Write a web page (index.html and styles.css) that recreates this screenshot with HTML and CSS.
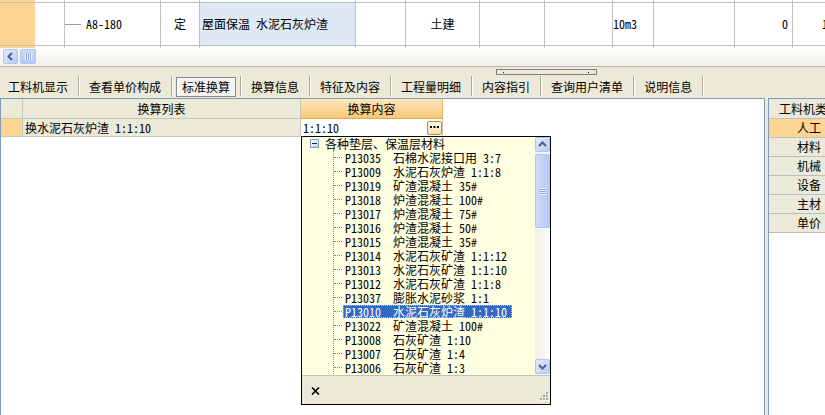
FILE: index.html
```html
<!DOCTYPE html>
<html lang="zh-CN">
<head>
<meta charset="utf-8">
<title>标准换算</title>
<link rel="stylesheet" href="styles.css">
</head>
<body>
<div class="topgrid">
  <div class="tg-row tg-r-top">
    <div class="c c0"></div><div class="c c1"></div><div class="c c2"></div><div class="c c3"></div><div class="c c4"></div><div class="c c5"></div><div class="c c6"></div><div class="c c7"></div><div class="c c8"></div><div class="c c9"></div><div class="c c10"></div><div class="c c11"></div><div class="c c12"></div>
  </div>
  <div class="tg-row tg-r-main">
    <div class="c c0"></div>
    <div class="c c1"></div>
    <div class="c c2"><span class="tl"></span>A8-180</div>
    <div class="c c3 center">定</div>
    <div class="c c4 hl">屋面保温 水泥石灰炉渣</div>
    <div class="c c5"></div>
    <div class="c c6 center">土建</div>
    <div class="c c7"></div>
    <div class="c c8"></div>
    <div class="c c9">10m3</div>
    <div class="c c10"></div>
    <div class="c c11 right">0</div>
    <div class="c c12">1</div>
  </div>
  <div class="tg-row tg-r-bot">
    <div class="c c0"></div><div class="c c1"></div><div class="c c2"></div><div class="c c3"></div><div class="c c4"></div><div class="c c5"></div><div class="c c6"></div><div class="c c7"></div><div class="c c8"></div><div class="c c9"></div><div class="c c10"></div><div class="c c11"></div><div class="c c12"></div>
  </div>
</div>

<div class="hscroll">
  <div class="sb-btn">
    <svg width="9" height="9" viewBox="0 0 9 9"><polyline points="6,1 2.5,4.5 6,8" fill="none" stroke="#4d6185" stroke-width="2"/></svg>
  </div>
  <div class="sb-btn sb-thumb-h">
    <svg width="7" height="7" viewBox="0 0 7 7"><path d="M0.5 0v7M2.5 0v7M4.5 0v7M6.5 0v7" stroke="#eef3ff" stroke-width="1"/><path d="M1.5 0v7M3.5 0v7M5.5 0v7" stroke="#8ea7dd" stroke-width="1"/></svg>
  </div>
</div>

<div class="splitter">
  <div class="grip"><i class="gdot"></i><i class="gdot"></i></div>
</div>

<div class="tabbar">
  <div class="tab first">工料机显示</div><i class="sep"></i>
  <div class="tab">查看单价构成</div><i class="sep"></i>
  <div class="tab active">标准换算</div><i class="sep"></i>
  <div class="tab">换算信息</div><i class="sep"></i>
  <div class="tab">特征及内容</div><i class="sep"></i>
  <div class="tab">工程量明细</div><i class="sep"></i>
  <div class="tab">内容指引</div><i class="sep"></i>
  <div class="tab">查询用户清单</div><i class="sep"></i>
  <div class="tab">说明信息</div><i class="sep"></i>
</div>

<div class="panels">
  <div class="lp">
    <div class="lrow lhead">
      <div class="l-sel"></div>
      <div class="l-list center">换算列表</div>
      <div class="l-cont center">换算内容</div>
    </div>
    <div class="lrow lbody">
      <div class="l-sel on"></div>
      <div class="l-list">换水泥石灰炉渣 1:1:10</div>
      <div class="l-cont">
        <span class="val">1:1:10</span>
        <span class="ell">
          <svg width="9" height="3" viewBox="0 0 9 3"><rect x="0" y="0" width="2" height="2" fill="#000"/><rect x="3.5" y="0" width="2" height="2" fill="#000"/><rect x="7" y="0" width="2" height="2" fill="#000"/></svg>
        </span>
      </div>
    </div>

    <div class="popup">
      <div class="tree">
        <div class="tree-list">
          <div class="root">
            <svg class="exp" width="9" height="9" viewBox="0 0 9 9">
              <defs><linearGradient id="eg" x1="0" y1="0" x2="1" y2="1"><stop offset="0" stop-color="#ffffff"/><stop offset="1" stop-color="#c4d2e4"/></linearGradient></defs>
              <rect x="0.5" y="0.5" width="8" height="8" fill="url(#eg)" stroke="#7f9fc0"/>
              <path d="M2 4.5h5" stroke="#1c2c4c" stroke-width="1"/>
            </svg>
            <span class="rlabel">各种垫层、保温层材料</span>
          </div>
          <div class="children">
            <div class="item"><span class="lab">P13035  石棉水泥接口用 3:7</span></div>
            <div class="item"><span class="lab">P13009  水泥石灰炉渣 1:1:8</span></div>
            <div class="item"><span class="lab">P13019  矿渣混凝土 35#</span></div>
            <div class="item"><span class="lab">P13018  炉渣混凝土 100#</span></div>
            <div class="item"><span class="lab">P13017  炉渣混凝土 75#</span></div>
            <div class="item"><span class="lab">P13016  炉渣混凝土 50#</span></div>
            <div class="item"><span class="lab">P13015  炉渣混凝土 35#</span></div>
            <div class="item"><span class="lab">P13014  水泥石灰矿渣 1:1:12</span></div>
            <div class="item"><span class="lab">P13013  水泥石灰矿渣 1:1:10</span></div>
            <div class="item"><span class="lab">P13012  水泥石灰矿渣 1:1:8</span></div>
            <div class="item"><span class="lab">P13037  膨胀水泥砂浆 1:1</span></div>
            <div class="item"><span class="lab selected">P13010  水泥石灰炉渣 1:1:10</span></div>
            <div class="item"><span class="lab">P13022  矿渣混凝土 100#</span></div>
            <div class="item"><span class="lab">P13008  石灰矿渣 1:10</span></div>
            <div class="item"><span class="lab">P13007  石灰矿渣 1:4</span></div>
            <div class="item"><span class="lab">P13006  石灰矿渣 1:3</span></div>
          </div>
        </div>
        <div class="vscroll">
          <div class="sb-btn">
            <svg width="9" height="9" viewBox="0 0 9 9"><polyline points="1,6 4.5,2.5 8,6" fill="none" stroke="#4d6185" stroke-width="2"/></svg>
          </div>
          <div class="sb-btn sb-thumb-v">
            <svg width="7" height="7" viewBox="0 0 7 7"><path d="M0 0.5h7M0 2.5h7M0 4.5h7M0 6.5h7" stroke="#eef3ff" stroke-width="1"/><path d="M0 1.5h7M0 3.5h7M0 5.5h7" stroke="#8ea7dd" stroke-width="1"/></svg>
          </div>
          <div class="sb-space"></div>
          <div class="sb-btn sb-down">
            <svg width="9" height="9" viewBox="0 0 9 9"><polyline points="1,3 4.5,6.5 8,3" fill="none" stroke="#4d6185" stroke-width="2"/></svg>
          </div>
        </div>
      </div>
      <div class="pfoot">
        <svg class="close" width="9" height="8" viewBox="0 0 9 8"><path d="M1 0.5L8 7.5M8 0.5L1 7.5" stroke="#000" stroke-width="1.6"/></svg>
        <svg class="rgrip" width="11" height="11" viewBox="0 0 11 11">
          <g fill="#fff"><rect x="9" y="1" width="2" height="2"/><rect x="6" y="4" width="2" height="2"/><rect x="9" y="4" width="2" height="2"/><rect x="3" y="7" width="2" height="2"/><rect x="6" y="7" width="2" height="2"/><rect x="9" y="7" width="2" height="2"/></g>
          <g fill="#a8a597"><rect x="8" y="0" width="2" height="2"/><rect x="5" y="3" width="2" height="2"/><rect x="8" y="3" width="2" height="2"/><rect x="2" y="6" width="2" height="2"/><rect x="5" y="6" width="2" height="2"/><rect x="8" y="6" width="2" height="2"/></g>
        </svg>
      </div>
    </div>
  </div>

  <div class="rp">
    <div class="rcol">
      <div class="rcell rhead">工料机类别</div>
      <div class="rcell on">人工</div>
      <div class="rcell">材料</div>
      <div class="rcell">机械</div>
      <div class="rcell">设备</div>
      <div class="rcell">主材</div>
      <div class="rcell">单价</div>
    </div>
  </div>
</div>
</body>
</html>
```

FILE: styles.css
```css
* { box-sizing: border-box; }
html, body { margin: 0; padding: 0; }
body {
  width: 825px;
  height: 415px;
  overflow: hidden;
  background: #ece9d8;
  color: #000;
  font-family: "Noto Sans Mono CJK SC", "Noto Sans CJK SC", sans-serif;
  font-size: 12px;
  line-height: 14px;
}

/* ---------- top grid ---------- */
.topgrid { height: 48px; background: #fff; overflow: hidden; }
.tg-row { display: flex; }
.tg-r-top { height: 3px; border-bottom: 1px solid #c0c0c0; }
.tg-r-main { height: 43px; border-bottom: 1px solid #c0c0c0; }
.tg-r-bot { height: 2px; }
.c {
  flex: none;
  height: 100%;
  border-right: 1px solid #c0c0c0;
  display: flex;
  align-items: center;
  white-space: nowrap;
  overflow: hidden;
}
.c.center { justify-content: center; }
.c.right { justify-content: flex-end; padding-right: 4px; }
.c0 { width: 35px; background: #fcd494; border-right: none; }
.c1 { width: 30px; }
.c2 { width: 96px; }
.c3 { width: 39px; }
.c4 { width: 156px; }
.c4.hl { background: #dfe8f5; padding-left: 2px; }
.c5 { width: 50px; }
.c6 { width: 74px; }
.c7 { width: 65px; }
.c8 { width: 68px; }
.c9 { width: 41px; }
.c10 { width: 81px; }
.c11 { width: 58px; }
.c12 { width: 60px; padding-left: 29px; border-right: none; }
.tl { display: inline-block; width: 16px; height: 1px; background: #9a9a9a; margin-right: 5px; }

/* ---------- horizontal scrollbar ---------- */
.hscroll {
  height: 19px;
  border-bottom: 1px solid #b8b6aa;
  background: linear-gradient(#fefefd, #f0efe9);
  display: flex;
  align-items: flex-start;
  gap: 2px;
  padding: 1px 0 0 3px;
}
.sb-btn {
  flex: none;
  width: 15px;
  height: 15px;
  border: 1px solid #b2c5f2;
  border-radius: 2px;
  background: linear-gradient(135deg, #e3ebfe, #b9ccf8);
  display: flex;
  align-items: center;
  justify-content: center;
}
.sb-thumb-h { width: 16px; background: linear-gradient(#cddafd, #b6c9f7); }

/* ---------- splitter ---------- */
.splitter { height: 8px; padding: 2px 0 0 496px; }
.grip {
  width: 101px;
  height: 6px;
  border: 1px solid #808080;
  display: flex;
  align-items: center;
  justify-content: space-between;
  padding: 0 7px 0 6px;
}
.gdot { display: block; width: 1px; height: 1px; background: #0000c0; }

/* ---------- tabs ---------- */
.tabbar { height: 23px; display: flex; align-items: flex-start; padding-top: 2px; }
.tab {
  flex: none;
  height: 20px;
  margin: 0 4px;
  padding: 0 5px;
  border: 1px solid transparent;
  display: flex;
  align-items: center;
  white-space: nowrap;
}
.tab.first { margin-left: 2px; }
.tab.active {
  border-color: #8a8a8a;
  background: #f4f3ee;
  box-shadow: inset 1px 1px 0 #ffffff;
}
.sep {
  flex: none;
  display: block;
  width: 1px;
  height: 20px;
  margin-top: -1px;
  background: #aca899;
  box-shadow: 1px 0 0 #ffffff;
}

/* ---------- panels ---------- */
.panels { height: 317px; display: flex; gap: 3px; }
.lp {
  flex: none;
  width: 765px;
  position: relative;
  background: #fff;
  border: 1px solid #7f9db9;
  border-bottom: none;
}
.lrow { display: flex; }
.lhead { height: 20px; }
.lbody { height: 18px; }
.l-sel, .l-list, .l-cont {
  flex: none;
  height: 100%;
  display: flex;
  align-items: center;
  white-space: nowrap;
  border-bottom: 1px solid #c9c6b6;
}
.center { justify-content: center; }
.l-sel { width: 22px; background: #ebe9d8; border-right: 1px solid #c9c6b6; }
.l-sel.on { background: #fcd494; }
.l-list { width: 278px; background: #ebe9d8; border-right: 1px solid #c9c6b6; }
.lbody .l-list { padding-left: 2px; }
.l-cont { width: 142px; border-right: 1px solid #c9c6b6; }
.lhead .l-cont { background: linear-gradient(#fee7bb, #f9c77a); border-right-color: #e9b76c; border-bottom-color: #e3a95a; }
.lbody .l-cont { background: #fff; padding-left: 2px; }
.val { flex: 1; }
.ell {
  flex: none;
  width: 15px;
  height: 14px;
  border: 1px solid #d08a2a;
  border-radius: 2px;
  background: linear-gradient(#fffbee, #f4dfae);
  display: flex;
  align-items: center;
  justify-content: center;
}

/* ---------- dropdown popup ---------- */
.popup {
  position: absolute;
  left: 300px;
  top: 37px;
  width: 250px;
  height: 269px;
  border: 1px solid #000;
  background: #ece9d8;
  display: flex;
  flex-direction: column;
}
.tree { height: 238px; display: flex; background: #ffffe1; }
.tree-list { flex: 1; }
.root { height: 13px; display: flex; align-items: center; }
.exp { flex: none; margin-left: 8px; }
.rlabel { margin-left: 6px; white-space: nowrap; }
.children { margin-left: 31px; border-left: 1px dotted #8c8c8c; }
.item { height: 14px; display: flex; align-items: center; }
.item::before {
  content: "";
  flex: none;
  width: 8px;
  margin-right: 1px;
  border-top: 1px dotted #8c8c8c;
}
.lab { white-space: pre; height: 13px; line-height: 13px; padding: 0 5px 0 2px; }
.lab.selected {
  background: #316ac5;
  color: #fff;
  outline: 1px dotted #f0c050;
  outline-offset: -1px;
}

.vscroll {
  flex: none;
  width: 15px;
  display: flex;
  flex-direction: column;
  background: linear-gradient(to right, #f1efe8, #fdfdfa);
  padding-bottom: 1px;
}
.sb-thumb-v { height: 74px; margin-top: 2px; background: linear-gradient(to right, #cddafd, #b6c9f7); }
.sb-space { flex: 1; }

.pfoot {
  height: 29px;
  border-top: 1px solid #c6c3b4;
  display: flex;
  align-items: center;
  padding-left: 9px;
}
.close { flex: none; margin-top: 2px; }
.rgrip { flex: none; margin-left: auto; align-self: flex-end; margin-right: 1px; margin-bottom: 1px; }

/* ---------- right panel ---------- */
.rp {
  flex: 1;
  min-width: 0;
  overflow: hidden;
  background: #fff;
  border-top: 1px solid #7f9db9;
  border-left: 1px solid #7f9db9;
}
.rcol { width: 80px; }
.rcell {
  height: 19px;
  background: #ebe9d8;
  border-bottom: 1px solid #bdbcc3;
  display: flex;
  align-items: center;
  justify-content: center;
  white-space: nowrap;
}
.rcell.rhead { height: 20px; }
.rcell.on { background: #fdd591; }
```
